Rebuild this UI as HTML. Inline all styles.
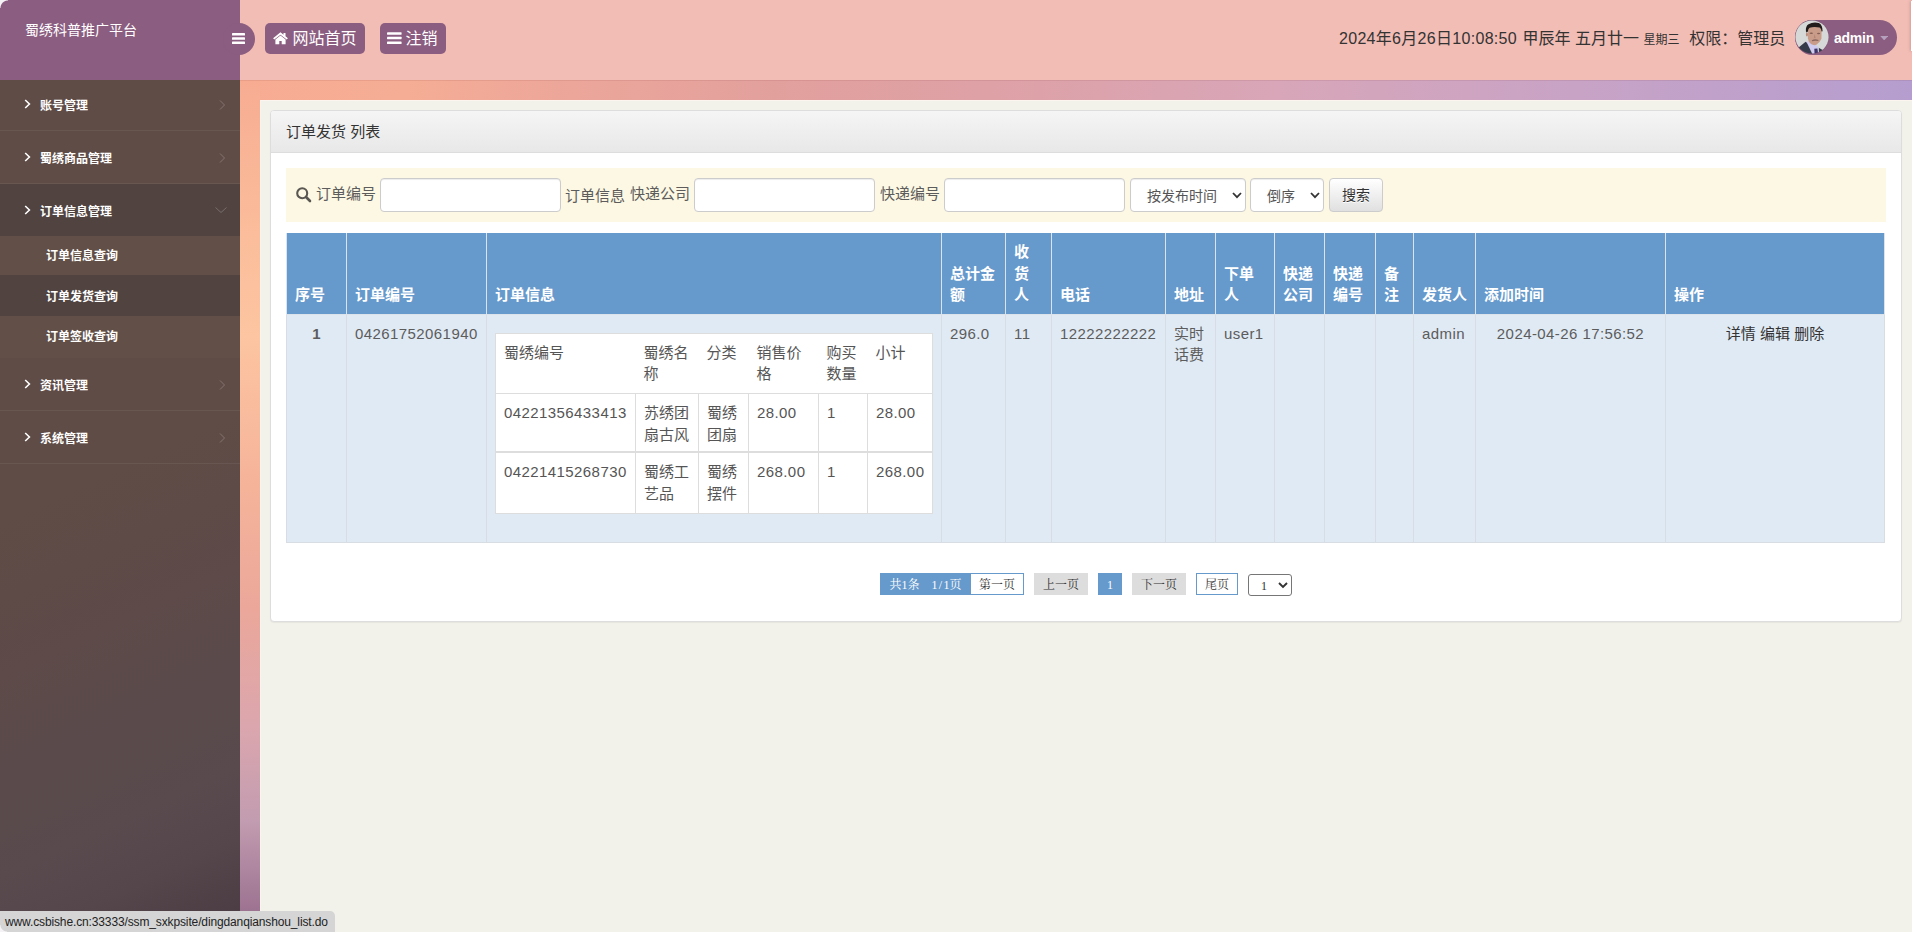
<!DOCTYPE html>
<html lang="zh-CN">
<head>
<meta charset="utf-8">
<title>蜀绣科普推广平台</title>
<style>
*{box-sizing:border-box;}
html,body{margin:0;padding:0;}
body{width:1912px;height:932px;overflow:hidden;position:relative;
  font-family:"Liberation Sans","Noto Sans CJK SC",sans-serif;font-size:15px;line-height:1.42857;color:#5c5c5c;
  background:#f2f1ea;}
a{color:inherit;text-decoration:none;}
.abs{position:absolute;}
/* background strips */
#bgtop{left:240px;top:80px;width:1672px;height:20px;
  background:linear-gradient(90deg,#f7ac92 0%,#f5ad95 10%,#eca69a 20%,#e2a09d 32%,#dea1a6 45%,#d8a6b8 62%,#c8a3c6 80%,#b59ecf 100%);}
#bgleft{left:240px;top:80px;width:20px;height:852px;
  background:linear-gradient(180deg,#f7ac92 0%,#fbbd9b 18%,#fdc5a1 30%,#f5b39a 48%,#eba79a 62%,#dba6ae 76%,#c29cb0 87%,#94698a 100%);}
/* sidebar */
#sidebar{left:0;top:0;width:240px;height:932px;
  background:linear-gradient(155deg,#5f4c46 0%,#5f4c46 50%,#5d4a49 65%,#584a4d 84%,#54464b 91%,#4a3a42 100%);}
#brand{left:0;top:0;width:240px;height:80px;background:#8b5d80;color:#fff;font-size:14px;}
#brand span{position:absolute;left:25px;top:20px;line-height:20px;white-space:nowrap;}
.mi{position:absolute;left:0;width:240px;height:53px;border-bottom:1px solid rgba(255,255,255,.06);color:#fff;font-size:12px;font-weight:bold;}
.mi .t{position:absolute;left:40px;top:17.5px;line-height:20px;white-space:nowrap;}
.mi svg.l{position:absolute;left:24px;top:21px;}
.mi svg.r{position:absolute;left:218px;top:20.5px;}
.mi.act{background:#504340;}
.si{position:absolute;left:0;width:240px;color:#fff;font-size:12px;font-weight:bold;background:#624f47;}
.si span{position:absolute;left:46px;line-height:20px;white-space:nowrap;}
.si.act{background:#504340;}
/* header */
#header{left:240px;top:0;width:1672px;height:80px;background:#f2bdb5;}
#toggle{left:223px;top:23px;width:32px;height:32px;border-radius:50%;background:#8b5d80;}
.hbtn{position:absolute;top:23px;height:31px;border-radius:5px;background:#8b5d80;color:#fff;font-size:16px;line-height:31px;white-space:nowrap;}
.hbtn span{position:absolute;top:0;}
#hinfo{left:1339px;top:26.5px;font-size:16px;line-height:24px;color:#333;white-space:nowrap;}
#hinfo small{font-size:12px;}
#pill{left:1795px;top:20px;width:102px;height:34.5px;border-radius:18px;background:#8b5d80;color:#fff;font-size:14px;font-weight:bold;}
/* content */
#panel{left:270px;top:110px;width:1632px;height:512px;background:#fff;border:1px solid #ddd;border-radius:4px;box-shadow:0 1px 1px rgba(0,0,0,.05);}
#phead{left:0;top:0;width:1630px;height:42px;background:linear-gradient(180deg,#f5f5f5 0%,#e8e8e8 100%);border-bottom:1px solid #ddd;border-radius:3px 3px 0 0;color:#333;}
#phead span{position:absolute;left:15px;top:10px;line-height:21px;}
#search{left:286px;top:168px;width:1600px;height:54px;background:#fcf8e3;font-size:15px;color:#5c5c5c;}
#search .lb{position:absolute;top:15px;line-height:21px;white-space:nowrap;}
.inp{position:absolute;top:10px;height:34px;background:#fff;border:1px solid #ccc;border-radius:4px;box-shadow:inset 0 1px 1px rgba(0,0,0,.075);}
.sel{font-size:14px;color:#555;}
.sel span{position:absolute;top:7px;line-height:20px;white-space:nowrap;}
.sel svg{position:absolute;top:13px;}
#sbtn{position:absolute;left:1043px;top:10px;width:54px;height:34px;border:1px solid #ccc;border-radius:4px;background:linear-gradient(180deg,#fff 0%,#e0e0e0 100%);color:#333;font-size:14px;text-align:center;line-height:32px;text-shadow:0 1px 0 #fff;}
/* table */
#tbl{left:286px;top:233px;width:1598px;border-collapse:collapse;table-layout:fixed;}
#tbl th{background:#6699cc;color:#fff;font-weight:bold;text-align:left;vertical-align:bottom;padding:8px 8px 8px 8px;border:1px solid #dde3ea;border-top:0;height:81px;}
#tbl>tbody>tr>td{background:#e0eaf4;vertical-align:top;padding:8px;border:1px solid #d8dde3;height:228px;}
#tbl .n{letter-spacing:.42px;}
#inner{border-collapse:collapse;table-layout:fixed;width:437px;background:#fff;margin:11px 0 0 0;position:relative;top:-1px;}
#inner th,#inner td{padding:8px;vertical-align:top;text-align:left;font-weight:normal;color:#555;background:#fff;height:auto;}
#inner th{border:0;border-bottom:1px solid #ddd;padding-bottom:9px;}
#inner td{border:1px solid #ddd;}
#inner{border:1px solid #ddd;}
#inner tr.r2 td{padding-bottom:6.3px;}
#inner tr.r3 td{border-top:2px solid #ddd;padding-bottom:8.4px;}
/* pagination */
.pg{position:absolute;top:573px;height:22px;font-family:"Liberation Serif","Noto Serif CJK SC",serif;font-size:12px;line-height:24px;text-align:center;white-space:nowrap;}
.pg.b{background:#6699cc;color:#fff;}
.pg.w{background:#fff;border:1px solid #6699cc;color:#333;line-height:22px;}
.pg.g{background:#ddd;color:#333;}
#status{left:0;top:911px;width:335px;height:21px;letter-spacing:-.13px;background:#d5d5d5;border-top-right-radius:5px;font-size:12px;line-height:22px;color:#222;padding-left:5px;white-space:nowrap;}
</style>
</head>
<body>
<div id="bgtop" class="abs"></div>
<div id="bgleft" class="abs"></div>

<div class="abs" style="left:260px;top:100px;width:1652px;height:832px;border-left:1px solid #faf3ee;border-top:1px solid #fbf4ef"></div>
<div id="header" class="abs"></div>
<div class="abs" style="left:240px;top:80px;width:1672px;height:1px;background:rgba(120,40,40,.1)"></div>
<div id="sidebar" class="abs">
  <div id="brand" class="abs"><span>蜀绣科普推广平台</span></div>
  <div class="mi" style="top:78px"><svg class="l" width="7" height="10" viewBox="0 0 7 10"><path d="M1.2 1 L5.4 5 L1.2 9" fill="none" stroke="#fff" stroke-width="1.6"/></svg><span class="t">账号管理</span><svg class="r" width="8" height="12" viewBox="0 0 8 12"><path d="M2 1.5 L6.5 6 L2 10.5" fill="none" stroke="rgba(255,255,255,.22)" stroke-width="1"/></svg></div>
  <div class="mi" style="top:131px"><svg class="l" width="7" height="10" viewBox="0 0 7 10"><path d="M1.2 1 L5.4 5 L1.2 9" fill="none" stroke="#fff" stroke-width="1.6"/></svg><span class="t">蜀绣商品管理</span><svg class="r" width="8" height="12" viewBox="0 0 8 12"><path d="M2 1.5 L6.5 6 L2 10.5" fill="none" stroke="rgba(255,255,255,.22)" stroke-width="1"/></svg></div>
  <div class="mi act" style="top:184px"><svg class="l" width="7" height="10" viewBox="0 0 7 10"><path d="M1.2 1 L5.4 5 L1.2 9" fill="none" stroke="#fff" stroke-width="1.6"/></svg><span class="t">订单信息管理</span><svg class="r" style="left:214px;top:22px" width="14" height="8" viewBox="0 0 14 8"><path d="M1.5 1.5 L7 6.5 L12.5 1.5" fill="none" stroke="rgba(255,255,255,.22)" stroke-width="1"/></svg></div>
  <div class="mi" style="top:358px"><svg class="l" width="7" height="10" viewBox="0 0 7 10"><path d="M1.2 1 L5.4 5 L1.2 9" fill="none" stroke="#fff" stroke-width="1.6"/></svg><span class="t">资讯管理</span><svg class="r" width="8" height="12" viewBox="0 0 8 12"><path d="M2 1.5 L6.5 6 L2 10.5" fill="none" stroke="rgba(255,255,255,.22)" stroke-width="1"/></svg></div>
  <div class="mi" style="top:411px"><svg class="l" width="7" height="10" viewBox="0 0 7 10"><path d="M1.2 1 L5.4 5 L1.2 9" fill="none" stroke="#fff" stroke-width="1.6"/></svg><span class="t">系统管理</span><svg class="r" width="8" height="12" viewBox="0 0 8 12"><path d="M2 1.5 L6.5 6 L2 10.5" fill="none" stroke="rgba(255,255,255,.22)" stroke-width="1"/></svg></div>
  <div class="si" style="top:236px;height:39px"><span style="top:10px">订单信息查询</span></div>
  <div class="si act" style="top:275px;height:41px"><span style="top:11.5px">订单发货查询</span></div>
  <div class="si" style="top:316px;height:42px"><span style="top:11px">订单签收查询</span></div>
</div>

<div id="toggle" class="abs"><svg style="position:absolute;left:9px;top:10px" width="13" height="11" viewBox="0 0 13 11"><rect x="0" y="0.0" width="13" height="2.6" rx="0.6" fill="#fff"/><rect x="0" y="4.2" width="13" height="2.6" rx="0.6" fill="#fff"/><rect x="0" y="8.4" width="13" height="2.6" rx="0.6" fill="#fff"/></svg></div>
<a class="hbtn" style="left:265px;width:100px"><svg style="position:absolute;left:8px;top:9px" width="15" height="13" viewBox="0 0 15 14" preserveAspectRatio="none"><path d="M7.5 0.4 L0.1 6.8 L1.3 8.2 L7.5 2.9 L13.7 8.2 L14.9 6.8 L12.5 4.7 V1.2 H10.5 V3 Z" fill="#fff"/><path d="M7.5 3.7 L2.4 8 V13.2 H6.3 V9.6 H8.7 V13.2 H12.6 V8 Z" fill="#fff"/></svg><span style="left:27.5px">网站首页</span></a>
<a class="hbtn" style="left:380px;width:66px"><svg style="position:absolute;left:7px;top:9.2px" width="14.6" height="12.2" viewBox="0 0 15 12.2"><rect x="0" y="0.0" width="15" height="2.6" rx="0.5" fill="#fff"/><rect x="0" y="4.8" width="15" height="2.6" rx="0.5" fill="#fff"/><rect x="0" y="9.6" width="15" height="2.6" rx="0.5" fill="#fff"/></svg><span style="left:25.5px">注销</span></a>
<div id="hinfo" class="abs"><span class="h1" style="letter-spacing:.3px">2024年6月26日10:08:50</span> <span class="h2" style="margin-left:1px">甲辰年</span> <span class="h3">五月廿一</span> <small class="h4">星期三</small>&nbsp; <span class="h5" style="margin-left:1px">权限：管理员</span></div>
<div id="pill" class="abs">
  <svg style="position:absolute;left:0px;top:0.3px" width="34" height="34" viewBox="0 0 34 34">
    <defs><clipPath id="av"><circle cx="17" cy="17" r="16.6"/></clipPath><filter id="bl" x="-10%" y="-10%" width="120%" height="120%"><feGaussianBlur stdDeviation="0.45"/></filter></defs>
    <circle cx="17" cy="17" r="17" fill="#7d5474"/>
    <g clip-path="url(#av)"><g filter="url(#bl)">
      <rect x="-2" y="-2" width="38" height="38" fill="#d7d9d8"/>
      <path d="M3 28 L10.6 21.8 L14 24 L18 34 L24 34 L23.7 27.7 L28.5 30.5 L27 36 L2 36 Z" fill="#363a49"/>
      <path d="M11.3 21.6 L14.5 21 L22 26 L23.6 28 L23 35 L17.8 35 Z" fill="#cfcaf0"/>
      <path d="M19.3 28.8 L22.4 28.4 L23.2 34.5 L19.6 34.5 Z" fill="#3d3568"/>
      <path d="M12.6 6 L12.9 18.5 Q13.4 22 16 24 Q18.6 25.8 21.4 24.8 Q24.8 23 26.4 18.8 L26.8 6 Z" fill="#c99c8a"/>
      <ellipse cx="11.9" cy="14.6" rx="1" ry="2" fill="#b98876"/>
      <path d="M10.9 11.2 Q10.5 6 13.5 4.2 Q18 1.6 23.7 2.9 Q27.6 4.5 27.6 11.2 L26.6 11.4 Q26.4 8.6 24.6 7.6 Q19 6.4 14.6 7.8 Q13 9 12.9 11.4 L11.6 12.6 Z" fill="#221b1b"/>
      <ellipse cx="16.3" cy="13.2" rx="1.7" ry="0.8" fill="#6e4a40" opacity=".75"/>
      <ellipse cx="23.6" cy="13.5" rx="1.6" ry="0.8" fill="#6e4a40" opacity=".75"/>
      <path d="M19.6 14 L20.6 18 L18.8 18.2 Z" fill="#a97866" opacity=".6"/>
      <path d="M16.8 20.2 Q20 18.6 23.6 20 L23.2 21 Q20 20.2 17.2 21.2 Z" fill="#7a5a52" opacity=".8"/>
    </g></g>
  </svg>
  <span style="position:absolute;left:39px;top:7.5px;line-height:20px;letter-spacing:-.25px">admin</span>
  <svg style="position:absolute;left:85px;top:16px" width="8.4" height="4.4" viewBox="0 0 9 5"><path d="M0 0 H9 L4.5 5 Z" fill="#b5a0be"/></svg>
</div>
<div class="abs" style="left:1910.6px;top:1px;width:3px;height:50px;background:#fff;box-shadow:-1px 0 3px rgba(90,40,40,.22)"></div>
<div class="abs" style="left:0;top:0;width:8px;height:8px;background:radial-gradient(circle at 100% 100%,rgba(245,243,246,0) 7px,#f5f3f6 8px)"></div>

<div id="panel" class="abs">
  <div id="phead" class="abs"><span>订单发货 列表</span></div>
</div>
<div id="search" class="abs">
  <svg style="position:absolute;left:10px;top:19px" width="16" height="16" viewBox="0 0 16 16"><circle cx="6.2" cy="6.2" r="5" fill="none" stroke="#5a5652" stroke-width="2.1"/><path d="M10 10 L14 14" stroke="#5a5652" stroke-width="2.6" stroke-linecap="round"/></svg>
  <span class="lb" style="left:30px">订单编号</span>
  <div class="inp" style="left:94px;width:181px"></div>
  <span class="lb" style="left:279px;top:17px">订单信息</span>
  <span class="lb" style="left:344px">快递公司</span>
  <div class="inp" style="left:408px;width:181px"></div>
  <span class="lb" style="left:594px">快递编号</span>
  <div class="inp" style="left:658px;width:181px"></div>
  <div class="inp sel" style="left:844px;width:116px"><span style="left:16px">按发布时间</span><svg style="left:101px" width="10" height="7" viewBox="0 0 10 7"><path d="M1 1 L5 5.2 L9 1" fill="none" stroke="#333" stroke-width="1.8"/></svg></div>
  <div class="inp sel" style="left:964px;width:74px"><span style="left:16px">倒序</span><svg style="left:59px" width="10" height="7" viewBox="0 0 10 7"><path d="M1 1 L5 5.2 L9 1" fill="none" stroke="#333" stroke-width="1.8"/></svg></div>
  <div id="sbtn">搜索</div>
</div>
<table id="tbl" class="abs">
  <colgroup><col style="width:60px"><col style="width:140px"><col style="width:455px"><col style="width:64px"><col style="width:46px"><col style="width:114px"><col style="width:50px"><col style="width:59px"><col style="width:50px"><col style="width:51px"><col style="width:38px"><col style="width:62px"><col style="width:190px"><col style="width:219px"></colgroup>
  <thead><tr>
    <th>序号</th><th>订单编号</th><th>订单信息</th><th>总计金额</th><th>收货人</th><th>电话</th><th>地址</th><th>下单人</th><th>快递公司</th><th>快递编号</th><th>备注</th><th>发货人</th><th>添加时间</th><th>操作</th>
  </tr></thead>
  <tbody><tr>
    <td style="text-align:center;font-weight:bold">1</td>
    <td><span class="n">04261752061940</span></td>
    <td>
      <table id="inner">
        <colgroup><col style="width:140px"><col style="width:63px"><col style="width:50px"><col style="width:70px"><col style="width:49px"><col style="width:65px"></colgroup>
        <tr><th>蜀绣编号</th><th>蜀绣名称</th><th>分类</th><th>销售价格</th><th>购买数量</th><th>小计</th></tr>
        <tr class="r2"><td><span class="n">04221356433413</span></td><td>苏绣团扇古风</td><td>蜀绣团扇</td><td><span class="n">28.00</span></td><td><span class="n">1</span></td><td><span class="n">28.00</span></td></tr>
        <tr class="r3"><td><span class="n">04221415268730</span></td><td>蜀绣工艺品</td><td>蜀绣摆件</td><td><span class="n">268.00</span></td><td><span class="n">1</span></td><td><span class="n">268.00</span></td></tr>
      </table>
    </td>
    <td><span class="n">296.0</span></td>
    <td><span class="n">11</span></td>
    <td><span class="n">12222222222</span></td>
    <td>实时话费</td>
    <td><span class="n">user1</span></td>
    <td></td><td></td><td></td>
    <td><span class="n">admin</span></td>
    <td style="text-align:center"><span class="n">2024-04-26 17:56:52</span></td>
    <td style="text-align:center;color:#333"><a>详情</a> <a>编辑</a> <a>删除</a></td>
  </tr></tbody>
</table>
<div class="pg b" style="left:880px;width:91px">共1条<i style="display:inline-block;width:12px"></i>1<i style="font-style:normal;display:inline-block;width:6px">/</i>1页</div>
<div class="pg w" style="left:970px;width:54px">第一页</div>
<div class="pg g" style="left:1034px;width:54px">上一页</div>
<div class="pg b" style="left:1098px;width:24px">1</div>
<div class="pg g" style="left:1132px;width:54px">下一页</div>
<div class="pg w" style="left:1196px;width:42px">尾页</div>
<div class="pg" style="left:1248px;top:574px;width:44px;height:22px;background:#fff;border:1px solid #767676;border-radius:3px;color:#333;line-height:22px;text-align:left;padding-left:12px">1<svg style="position:absolute;left:29px;top:7px" width="10" height="7" viewBox="0 0 10 7"><path d="M1 1 L5 5 L9 1" fill="none" stroke="#333" stroke-width="1.9"/></svg></div>
<div id="status" class="abs">www.csbishe.cn:33333/ssm_sxkpsite/dingdanqianshou_list.do</div>
<div class="abs" style="left:0;top:925px;width:7px;height:7px;background:radial-gradient(circle at 100% 0%,rgba(245,243,246,0) 6px,#f5f3f6 7px)"></div>
</body>
</html>
